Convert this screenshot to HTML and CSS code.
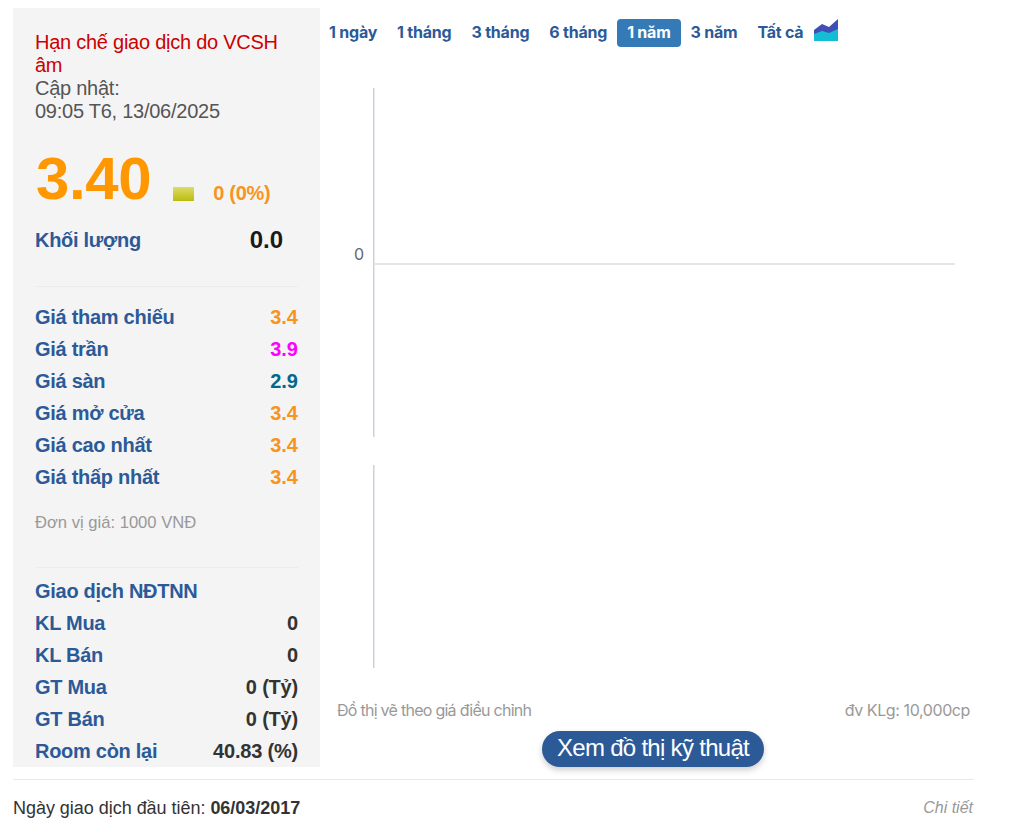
FILE: index.html
```html
<!DOCTYPE html>
<html lang="vi">
<head>
<meta charset="utf-8">
<title>Hạn chế giao dịch</title>
<link rel="stylesheet" href="styles.css">
</head>
<body>
<div class="page">
  <div class="top">
    <aside class="panel">
      <div class="status">
        <div class="warn">Hạn chế giao dịch do VCSH âm</div>
        <div>Cập nhật:</div>
        <div>09:05 T6, 13/06/2025</div>
      </div>
      <div class="price">
        <span class="big">3.40</span>
        <span class="flat"></span>
        <span class="change">0 (0%)</span>
      </div>
      <div class="row vol"><span class="lbl">Khối lượng</span><span class="volv">0.0</span></div>
      <hr class="sep first">
      <div class="row"><span class="lbl">Giá tham chiếu</span><span class="orange">3.4</span></div>
      <div class="row"><span class="lbl">Giá trần</span><span class="pink">3.9</span></div>
      <div class="row"><span class="lbl">Giá sàn</span><span class="teal">2.9</span></div>
      <div class="row"><span class="lbl">Giá mở cửa</span><span class="orange">3.4</span></div>
      <div class="row"><span class="lbl">Giá cao nhất</span><span class="orange">3.4</span></div>
      <div class="row"><span class="lbl">Giá thấp nhất</span><span class="orange">3.4</span></div>
      <div class="unit">Đơn vị giá: 1000 VNĐ</div>
      <hr class="sep second">
      <div class="row"><span class="lbl">Giao dịch NĐTNN</span></div>
      <div class="row"><span class="lbl">KL Mua</span><span class="dark">0</span></div>
      <div class="row"><span class="lbl">KL Bán</span><span class="dark">0</span></div>
      <div class="row"><span class="lbl">GT Mua</span><span class="dark">0 (Tỷ)</span></div>
      <div class="row"><span class="lbl">GT Bán</span><span class="dark">0 (Tỷ)</span></div>
      <div class="row"><span class="lbl">Room còn lại</span><span class="dark">40.83 (%)</span></div>
    </aside>
    <main class="chart">
      <nav class="tabs">
        <a class="tab">1 ngày</a>
        <a class="tab">1 tháng</a>
        <a class="tab">3 tháng</a>
        <a class="tab">6 tháng</a>
        <a class="tab active">1 năm</a>
        <a class="tab">3 năm</a>
        <a class="tab">Tất cả</a>
        <svg class="areaicon" width="24" height="22" viewBox="0 0 24 22">
          <path d="M0 11 L8 5 L15 8 L24 0 V13 L15 16 L8 14 L0 17 Z" fill="#3f4fb5"/>
          <path d="M0 15 L8 12 L15 14 L24 10 V22 H0 Z" fill="#14bcd4"/>
        </svg>
      </nav>
      <svg class="plot" width="689" height="646" viewBox="0 0 689 646">
        <line x1="53.75" y1="34" x2="53.75" y2="383" class="axis"/>
        <line x1="53.75" y1="411" x2="53.75" y2="614" class="axis"/>
        <line x1="54" y1="210" x2="635" y2="210" class="grid"/>
        <text x="34" y="206" class="zero">0</text>
      </svg>
      <div class="notes"><span class="note-left">Đồ thị vẽ theo giá điều chỉnh</span><span class="note-right">đv KLg: 10,000cp</span></div>
      <div class="btnwrap"><a class="btn">Xem đồ thị kỹ thuật</a></div>
    </main>
  </div>
  <hr class="rule">
  <div class="foot">
    <span class="since">Ngày giao dịch đầu tiên: <b>06/03/2017</b></span>
    <i class="more">Chi tiết</i>
  </div>
</div>
</body>
</html>
```
FILE: styles.css
```css
* { box-sizing: border-box; }
html, body { margin: 0; padding: 0; background: #fff; }
body { font-family: "Liberation Sans", Arial, sans-serif; color: #333; overflow: hidden; }
.page { width: 1009px; height: 819px; padding: 8px 0 0 13px; }
.top { display: flex; align-items: flex-start; }
.panel { width: 307px; height: 759px; background: #f4f4f5; padding: 23px 22px 0; flex: none; overflow: hidden; }
.status { font-size: 20px; line-height: 23px; color: #555; letter-spacing: -0.25px; }
.warn { color: #c00; }
.price { display: flex; align-items: baseline; margin-top: 22px; height: 68px; padding-left: 1px; }
.big { font-size: 60px; font-weight: 700; color: #ff9800; line-height: 68px; letter-spacing: -0.4px; }
.flat { width: 21px; height: 14px; margin-left: 22px; background: linear-gradient(#dbdc6c, #bcbc0a); align-self: flex-end; margin-bottom: 12px; }
.change { font-size: 20px; line-height: 20px; font-weight: 700; color: #f7941d; margin-left: 19px; letter-spacing: -0.3px; align-self: flex-end; margin-bottom: 10px; }
.row { display: flex; justify-content: space-between; font-size: 20px; font-weight: 700; line-height: 32px; height: 32px; }
.lbl { color: #2c5a97; letter-spacing: -0.28px; }
.vol { margin-top: 11px; padding-right: 15px; }
.volv { font-size: 24px; color: #1a1a1a; }
.sep { border: 0; border-top: 1px solid #ececec; margin: 0; }
.sep.first { margin-top: 30px; margin-bottom: 14px; }
.sep.second { margin-top: 34px; margin-bottom: 7px; }
.orange { color: #f7941d; }
.pink { color: #f0f; }
.teal { color: #00688b; }
.dark { color: #333; letter-spacing: -0.2px; }
.unit { font-size: 16.6px; line-height: 20px; color: #999; margin-top: 20px; }
.chart { flex: 1; display: flex; flex-direction: column; height: 759px; font-family: Inter, sans-serif; }
.tabs { display: flex; align-items: center; height: 28px; margin-top: 11px; margin-left: -1px; }
.tab { font-size: 16px; font-weight: 700; color: #2c5a97; padding: 0 10px; height: 28px; line-height: 27px; border-radius: 4px; white-space: nowrap; letter-spacing: -0.22px; }
.tab.active { background: #337ab7; color: #fff; }
.areaicon { margin-left: 1px; margin-top: -6px; }
.plot { display: block; flex: none; margin-top: 7px; height: 646px; }
.axis { stroke: #ccd2dc; stroke-width: 1.5; }
.grid { stroke: #e6e6e6; stroke-width: 2; }
.zero { font-family: Inter, sans-serif; font-size: 16px; fill: #666; }
.notes { display: flex; justify-content: space-between; font-size: 16px; line-height: 20px; color: #999; padding: 0 39px 0 17px; }
.note-left { letter-spacing: -0.73px; }
.note-right { letter-spacing: -0.4px; }
.btnwrap { display: flex; justify-content: center; padding-right: 23px; margin-top: 11px; }
.btn { font-family: "Liberation Sans", Arial, sans-serif; display: block; width: 222px; height: 36px; border-radius: 18px; background: #2c5a97; color: #fff; font-size: 24px; letter-spacing: -0.7px; line-height: 34px; text-align: center; box-shadow: 0 3px 6px rgba(0,0,0,.2); }
.rule { border: 0; border-top: 1px solid #e8e8e8; width: 961px; margin: 12px 0 0; }
.foot { display: flex; justify-content: space-between; width: 960px; margin-top: 18px; font-size: 18px; line-height: 20px; color: #333; }
.since { letter-spacing: -0.03px; }
.more { color: #999; font-size: 16px; }
```
